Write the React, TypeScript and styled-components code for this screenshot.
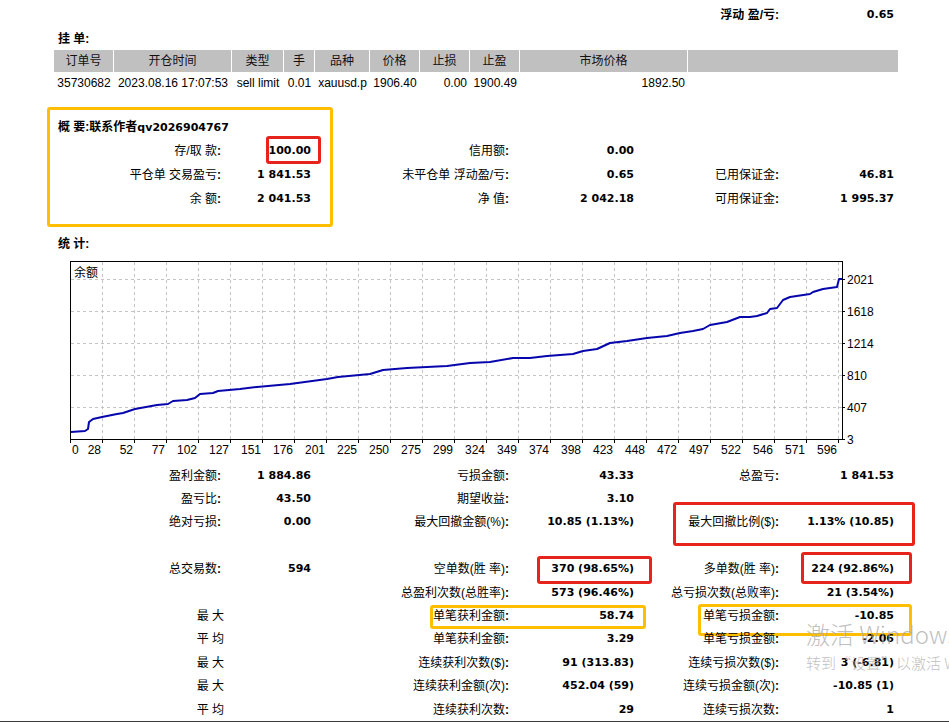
import React from "react";
import styled, { createGlobalStyle } from "styled-components";

const GlobalStyle = createGlobalStyle`
  html, body { margin: 0; padding: 0; background: #fff; }
  body {
    font-family: "Liberation Sans", "Noto Sans CJK SC", sans-serif;
    font-size: 12px;
    color: #000;
  }
`;

type Tone = "red" | "orange";
type Ann = { col: number; left: number; top: number; w: number; h: number; tone: Tone };
type Row = { cells: string[]; ann?: Ann[]; plain?: boolean };

const headCols: [string, number][] = [
  ["订单号", 60],
  ["开仓时间", 118],
  ["类型", 52],
  ["手", 31],
  ["品种", 55],
  ["价格", 50],
  ["止损", 50],
  ["止盈", 50],
  ["市场价格", 168],
  ["", 210],
];

const orderRow: [string, "center" | "right"][] = [
  ["35730682", "center"],
  ["2023.08.16 17:07:53", "center"],
  ["sell limit", "center"],
  ["0.01", "center"],
  ["xauusd.p", "center"],
  ["1906.40", "center"],
  ["0.00", "right"],
  ["1900.49", "right"],
  ["1892.50", "right"],
  ["", "right"],
];

const summaryRows: Row[] = [
  {
    cells: ["存/取 款:", "100.00", "信用额:", "0.00", "", ""],
    ann: [{ col: 1, left: 41, top: -5, w: 55, h: 28, tone: "red" }],
  },
  { cells: ["平仓单 交易盈亏:", "1 841.53", "未平仓单 浮动盈/亏:", "0.65", "已用保证金:", "46.81"] },
  { cells: ["余 额:", "2 041.53", "净 值:", "2 042.18", "可用保证金:", "1 995.37"] },
];

const statRows: Row[] = [
  { cells: ["盈利金额:", "1 884.86", "亏损金额:", "43.33", "总盈亏:", "1 841.53"] },
  { cells: ["盈亏比:", "43.50", "期望收益:", "3.10", "", ""] },
  {
    cells: ["绝对亏损:", "0.00", "最大回撤金额(%):", "10.85 (1.13%)", "最大回撤比例($):", "1.13% (10.85)"],
    ann: [{ col: 4, left: 35, top: -10, w: 242, h: 44, tone: "red" }],
  },
  { cells: ["", "", "", "", "", ""] },
  {
    cells: ["总交易数:", "594", "空单数(胜 率):", "370 (98.65%)", "多单数(胜 率):", "224 (92.86%)"],
    ann: [
      { col: 3, left: 24, top: -3, w: 115, h: 28, tone: "red" },
      { col: 5, left: 18, top: -7, w: 111, h: 32, tone: "red" },
    ],
  },
  { cells: ["", "", "总盈利次数(总胜率):", "573 (96.46%)", "总亏损次数(总败率):", "21 (3.54%)"] },
  {
    cells: ["最 大", "", "单笔获利金额:", "58.74", "单笔亏损金额:", "-10.85"],
    plain: true,
    ann: [
      { col: 2, left: 115, top: -1, w: 216, h: 24, tone: "orange" },
      { col: 4, left: 60, top: -2, w: 214, h: 32, tone: "orange" },
    ],
  },
  { cells: ["平 均", "", "单笔获利金额:", "3.29", "单笔亏损金额:", "-2.06"], plain: true },
  { cells: ["最 大", "", "连续获利次数($):", "91 (313.83)", "连续亏损次数($):", "3 (-6.81)"], plain: true },
  { cells: ["最 大", "", "连续获利金额(次):", "452.04 (59)", "连续亏损金额(次):", "-10.85 (1)"], plain: true },
  { cells: ["平 均", "", "连续获利次数:", "29", "连续亏损次数:", "1"], plain: true },
];

const xTicks = [0, 28, 52, 77, 102, 127, 151, 176, 201, 225, 250, 275, 299, 324, 349, 374, 398, 423, 448, 472, 497, 522, 546, 571, 596];
const yTicks: [number, number][] = [
  [2021, 279.5],
  [1618, 311.5],
  [1214, 343.5],
  [810, 375.5],
  [407, 407.5],
  [3, 439.5],
];

const curve = [
  [71, 432], [85, 431], [88, 429], [89, 422], [93, 419], [102, 417], [117, 414], [123, 413],
  [135, 409], [157, 405], [168, 404], [173, 401], [187, 400], [195, 398], [200, 394], [213, 393],
  [218, 391], [240, 389], [257, 387], [290, 384], [327, 379], [338, 377], [370, 374], [383, 370],
  [407, 368], [447, 366], [470, 363], [490, 362], [513, 358], [530, 358], [547, 356], [573, 354],
  [583, 351], [597, 349], [610, 343], [627, 341], [647, 338], [667, 336], [680, 333], [693, 331],
  [703, 329], [710, 325], [727, 322], [740, 317], [750, 317], [757, 316], [767, 313], [770, 309],
  [777, 308], [783, 300], [790, 297], [810, 294], [813, 292], [823, 289], [837, 287], [839, 279],
  [842, 279],
];

const Page = styled.div`
  position: relative;
  width: 949px;
  height: 722px;
  overflow: hidden;
  padding-left: 54px;
  box-sizing: border-box;
`;

const Grid = styled.div<{ $row: number }>`
  display: grid;
  width: 844px;
  grid-template-columns: 171px 90px 198px 125px 145px 115px;
  grid-auto-rows: ${(p) => p.$row}px;
  align-items: center;
`;

const TopBar = styled(Grid)`
  margin-top: 2px;
`;

const Cell = styled.div<{ $bold?: boolean; $plain?: boolean }>`
  position: relative;
  text-align: right;
  padding: 2px 4px 0 0;
  margin-right: ${(p) => (p.$plain ? "-3px" : "0")};
  white-space: pre;
  line-height: 16px;
  font-weight: ${(p) => (p.$bold ? 700 : 400)};
`;

const ValueCell = styled(Cell)`
  font-family: "DejaVu Sans", "Noto Sans CJK SC", sans-serif;
  font-size: 11px;
  font-weight: 700;
`;

const Colon = styled.span`
  font-weight: 700;
`;

const Title = styled.div`
  box-sizing: border-box;
  height: 24px;
  line-height: 22px;
  padding: 2px 0 0 4px;
  font-weight: 700;
`;

const Latin = styled.span`
  font-family: "DejaVu Sans", sans-serif;
  font-size: 11px;
`;

const Mark = styled.div<{ $tone: Tone }>`
  position: absolute;
  box-sizing: border-box;
  border: 3px solid ${(p) => (p.$tone === "red" ? "#e8231c" : "#ffbf00")};
  border-radius: 3px;
  pointer-events: none;
`;

const HeadRow = styled.div`
  display: flex;
  width: 844px;
  height: 22px;
  background: #c0c0c0;
`;

const HeadCell = styled.div<{ $w: number }>`
  box-sizing: border-box;
  flex: 0 0 ${(p) => p.$w}px;
  border-right: 1px solid #fff;
  text-align: center;
  line-height: 22px;
  color: #111;
  &:last-child { border-right: none; }
`;

const DataRow = styled.div`
  display: flex;
  width: 844px;
  height: 22px;
`;

const DataCell = styled.div<{ $w: number; $align: "center" | "right" }>`
  box-sizing: border-box;
  flex: 0 0 ${(p) => p.$w}px;
  text-align: ${(p) => p.$align};
  padding-right: ${(p) => (p.$align === "right" ? "3px" : "0")};
  line-height: 22px;
  white-space: nowrap;
`;

const Summary = styled.section`
  position: relative;
  margin-top: 13px;
  padding: 7px 0 21px;
`;

const SummaryFrame = styled(Mark)`
  left: -7px;
  top: 0;
  width: 286px;
  height: 120px;
`;

const ChartSvg = styled.svg`
  display: block;
`;

const Edge = styled.div`
  position: absolute;
  left: 0;
  right: 0;
  bottom: 0;
  height: 1px;
  background: #3a3a3a;
`;

const Watermark = styled.div`
  position: absolute;
  left: 806px;
  top: 619px;
  white-space: nowrap;
  color: rgba(170, 170, 170, 0.75);
  font-family: "Noto Sans CJK SC", "Liberation Sans", sans-serif;
  font-weight: 300;
  pointer-events: none;
`;

const WmBig = styled.div`
  font-size: 24px;
  line-height: 30px;
  font-family: "Noto Sans CJK SC", "Open Sans", sans-serif;
`;

const WmSmall = styled.div`
  font-size: 15px;
  line-height: 22px;
  margin-top: 3px;
`;

function Label({ text, bold, plain }: { text: string; bold?: boolean; plain?: boolean }) {
  const hasColon = text.endsWith(":");
  const body = hasColon ? text.slice(0, -1) : text;
  return (
    <Cell $bold={bold} $plain={plain}>
      {body}
      {hasColon && <Colon>:</Colon>}
    </Cell>
  );
}

function Rows({ rows }: { rows: Row[] }) {
  return (
    <>
      {rows.map((r, ri) =>
        r.cells.map((c, ci) => {
          const marks = (r.ann || [])
            .filter((a) => a.col === ci)
            .map((a, k) => (
              <Mark key={k} $tone={a.tone} style={{ left: a.left, top: a.top, width: a.w, height: a.h }} />
            ));
          if (ci % 2 === 1) {
            return (
              <ValueCell key={`${ri}-${ci}`}>
                {c}
                {marks}
              </ValueCell>
            );
          }
          return (
            <Cell key={`${ri}-${ci}`} $plain={r.plain && ci === 0}>
              {c.endsWith(":") ? c.slice(0, -1) : c}
              {c.endsWith(":") && <Colon>:</Colon>}
              {marks}
            </Cell>
          );
        })
      )}
    </>
  );
}

function BalanceChart() {
  const left = 70;
  const right = 842;
  const top = 261;
  const bottom = 440;
  return (
    <ChartSvg width={895} height={208} viewBox="54 255 895 208">
      <rect x={left + 0.5} y={top + 0.5} width={right - left} height={bottom - top - 1} fill="#fff" stroke="#000" />
      {xTicks.slice(1).map((_, i) => {
        const x = left + 32 * (i + 1) + 0.5;
        return (
          <line key={`v${i}`} x1={x} x2={x} y1={top + 1} y2={bottom - 1} stroke="#c4c4c4" strokeDasharray="3 3" />
        );
      })}
      {yTicks.slice(0, 5).map(([, y], i) => (
        <line key={`h${i}`} x1={left + 1} x2={right} y1={y} y2={y} stroke="#c4c4c4" strokeDasharray="3 3" />
      ))}
      {yTicks.map(([, y], i) => (
        <line key={`yt${i}`} x1={right} x2={right + 3} y1={y} y2={y} stroke="#000" />
      ))}
      {xTicks.map((_, i) => {
        const x = left + 32 * i + 0.5;
        return <line key={`xt${i}`} x1={x} x2={x} y1={bottom} y2={bottom + 3} stroke="#000" />;
      })}
      <polyline
        points={curve.map((p) => p.join(",")).join(" ")}
        fill="none"
        stroke="#0606ac"
        strokeWidth={2}
        strokeLinejoin="round"
      />
      <text x={74} y={277} fontSize={12} fontFamily='"Noto Sans CJK SC", sans-serif'>
        余额
      </text>
      {yTicks.map(([v, y]) => (
        <text key={`yl${v}`} x={847} y={y + 4.5} fontSize={12} fontFamily='"Liberation Sans", sans-serif'>
          {v}
        </text>
      ))}
      {xTicks.map((v, i) => (
        <text
          key={`xl${v}`}
          x={i === 0 ? 72 : left + 32 * i - 1}
          y={453.5}
          fontSize={12}
          textAnchor={i === 0 ? "start" : "end"}
          fontFamily='"Liberation Sans", sans-serif'
        >
          {v}
        </text>
      ))}
    </ChartSvg>
  );
}

export default function App() {
  return (
    <>
      <GlobalStyle />
      <Page>
        <TopBar $row={24}>
          <Cell />
          <Cell />
          <Cell />
          <Cell />
          <Label text="浮动 盈/亏:" bold />
          <ValueCell>0.65</ValueCell>
        </TopBar>

        <Title>挂 单:</Title>
        <HeadRow>
          {headCols.map(([t, w], i) => (
            <HeadCell key={i} $w={w}>
              {t}
            </HeadCell>
          ))}
        </HeadRow>
        <DataRow>
          {orderRow.map(([t, a], i) => (
            <DataCell key={i} $w={headCols[i][1]} $align={a}>
              {t}
            </DataCell>
          ))}
        </DataRow>

        <Summary>
          <SummaryFrame $tone="orange" />
          <Title>
            概 要:联系作者<Latin>qv2026904767</Latin>
          </Title>
          <Grid $row={24}>
            <Rows rows={summaryRows} />
          </Grid>
        </Summary>

        <Title>统 计:</Title>
        <BalanceChart />

        <Grid $row={23.4}>
          <Rows rows={statRows} />
        </Grid>

        <Watermark>
          <WmBig>激活 Windows</WmBig>
          <WmSmall>转到“设置”以激活 Windows。</WmSmall>
        </Watermark>
        <Edge />
      </Page>
    </>
  );
}
